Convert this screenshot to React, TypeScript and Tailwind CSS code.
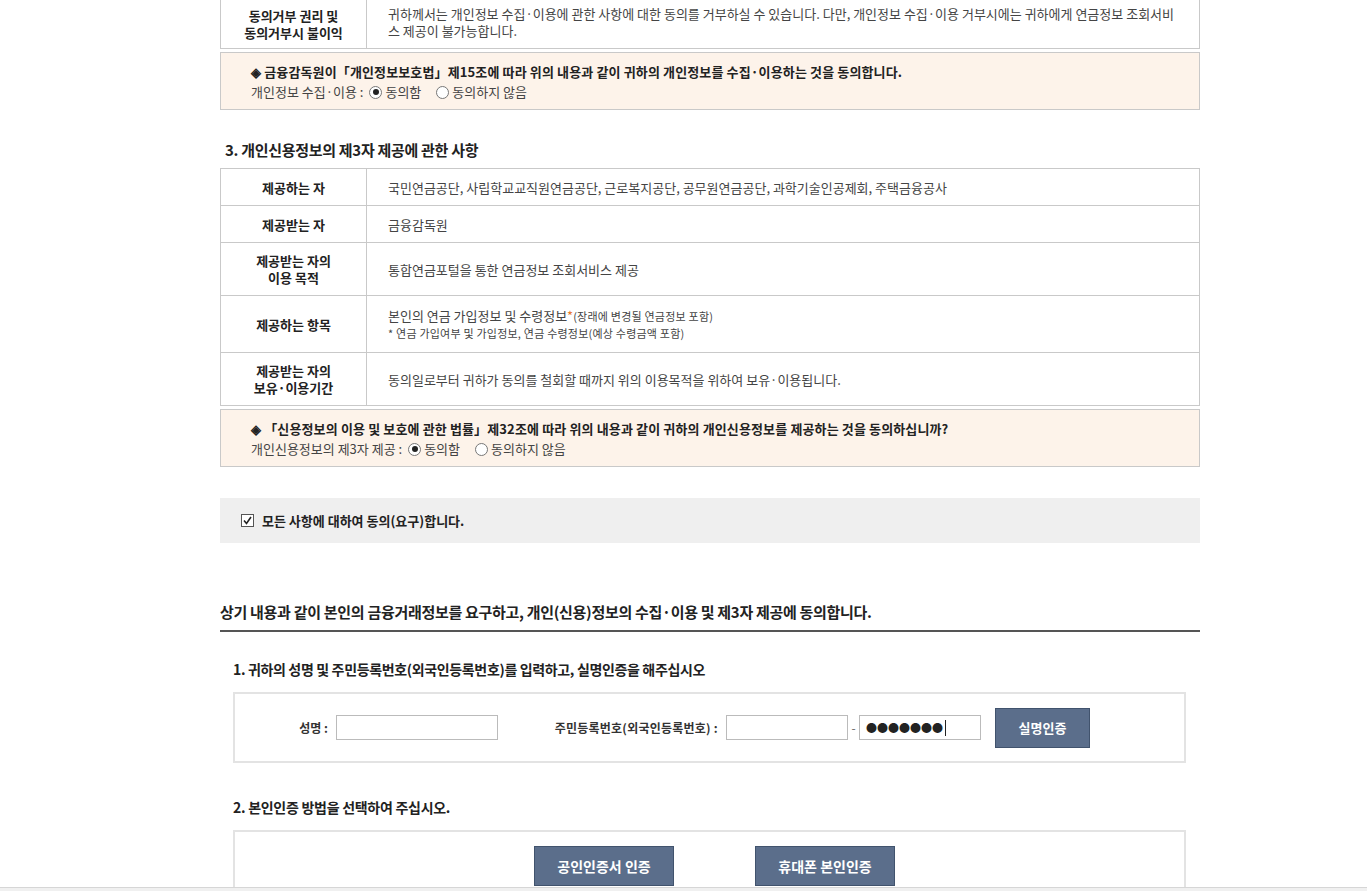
import type { ReactNode } from 'react';

const FONT = "font-['Noto_Sans_CJK_KR','Noto_Sans',sans-serif]";

const Radio = ({ checked }: { checked?: boolean }) => (
  <span className="inline-flex w-[13px] h-[13px] rounded-full border border-[#777] bg-white items-center justify-center mr-[3px] align-middle">
    {checked && <span className="w-[6px] h-[6px] rounded-full bg-[#222]" />}
  </span>
);

const Row = ({ head, children, h }: { head: ReactNode; children: ReactNode; h: string }) => (
  <div className={`flex border-b border-[#c9c9c9] ${h}`}>
    <div className="w-[146px] shrink-0 border-r border-[#c9c9c9] flex items-center justify-center text-center text-[13px] leading-[17px] font-bold text-[#222]">
      {head}
    </div>
    <div className="flex-1 flex flex-col justify-center pl-[21px] pr-[8px] text-[13px] leading-[17px] text-[#444]">
      {children}
    </div>
  </div>
);

const AgreeBox = ({ title, label }: { title: string; label: string }) => (
  <div className="mt-[3px] h-[58px] border border-[#c9c9c9] bg-[#fdf3ea] pl-[30px] pt-[9px]">
    <div className="text-[13px] leading-[20px] font-bold text-[#222] tracking-[0.01em]">◈ {title}</div>
    <div className="text-[13px] leading-[20px] text-[#444] flex items-center">
      <span>{label} :</span>
      <span className="ml-[6px] flex items-center"><Radio checked />동의함</span>
      <span className="ml-[15px] flex items-center"><Radio />동의하지 않음</span>
    </div>
  </div>
);

const Btn = ({ children, w, size }: { children: ReactNode; w: string; size: string }) => (
  <button className={`${w} ${size} h-[40px] bg-[#5b6e8b] border border-[#41536d] text-white font-bold`}>
    {children}
  </button>
);

export default function App() {
  return (
    <div className={`${FONT} h-[891px] w-full flex flex-col bg-white overflow-hidden`}>
      <div className="flex-1 overflow-hidden">
        <div className="ml-[220px] w-[980px]">
          {/* top table, cut off by the scroll */}
          <div className="border-x border-[#c9c9c9]">
            <Row h="h-[49px]" head={<>동의거부 권리 및<br />동의거부시 불이익</>}>
              <div className="pb-[4px] whitespace-nowrap">
                <div>귀하께서는 개인정보 수집·이용에 관한 사항에 대한 동의를 거부하실 수 있습니다. 다만, 개인정보 수집·이용 거부시에는 귀하에게 연금정보 조회서비</div>
                <div>스 제공이 불가능합니다.</div>
              </div>
            </Row>
          </div>
          <AgreeBox title="금융감독원이「개인정보보호법」제15조에 따라 위의 내용과 같이 귀하의 개인정보를 수집·이용하는 것을 동의합니다." label="개인정보 수집·이용" />

          <div className="mt-[30px] mb-[8px] pl-[5px] text-[15px] leading-[20px] font-bold text-[#222] tracking-[-0.02em]">
            3. 개인신용정보의 제3자 제공에 관한 사항
          </div>
          <div className="border-x border-t border-[#c9c9c9]">
            <Row h="h-[37px]" head="제공하는 자">
              국민연금공단, 사립학교교직원연금공단, 근로복지공단, 공무원연금공단, 과학기술인공제회, 주택금융공사
            </Row>
            <Row h="h-[37px]" head="제공받는 자">금융감독원</Row>
            <Row h="h-[53px]" head={<>제공받는 자의<br />이용 목적</>}>통합연금포털을 통한 연금정보 조회서비스 제공</Row>
            <Row h="h-[57px]" head="제공하는 항목">
              <div>
                본인의 연금 가입정보 및 수령정보<span className="text-[#e8782c]">*</span>
                <span className="text-[11px] tracking-[0.02em]">(장래에 변경될 연금정보 포함)</span>
              </div>
              <div className="text-[11px] leading-[17px] tracking-[0.02em]">* 연금 가입여부 및 가입정보, 연금 수령정보(예상 수령금액 포함)</div>
            </Row>
            <Row h="h-[53px]" head={<>제공받는 자의<br />보유·이용기간</>}>
              동의일로부터 귀하가 동의를 철회할 때까지 위의 이용목적을 위하여 보유·이용됩니다.
            </Row>
          </div>
          <AgreeBox title="「신용정보의 이용 및 보호에 관한 법률」제32조에 따라 위의 내용과 같이 귀하의 개인신용정보를 제공하는 것을 동의하십니까?" label="개인신용정보의 제3자 제공" />

          {/* agree all */}
          <div className="mt-[31px] h-[45px] bg-[#efefef] flex items-center pl-[21px] text-[13px] font-bold text-[#222]">
            <svg width="13" height="13" viewBox="0 0 13 13" className="mr-[8px]">
              <rect x="0.5" y="0.5" width="12" height="12" fill="#fff" stroke="#555" />
              <path d="M3 6.5 L5.5 9.5 L10 3" fill="none" stroke="#222" strokeWidth="1.6" />
            </svg>
            모든 사항에 대하여 동의(요구)합니다.
          </div>

          <div className="mt-[59px] pb-[8px] border-b-2 border-[#555] text-[15px] leading-[20px] font-bold text-[#222] tracking-[-0.02em]">
            상기 내용과 같이 본인의 금융거래정보를 요구하고, 개인(신용)정보의 수집·이용 및 제3자 제공에 동의합니다.
          </div>

          <div className="mt-[27px] ml-[13px] text-[14px] leading-[20px] font-bold text-[#222] tracking-[-0.025em]">
            1. 귀하의 성명 및 주민등록번호(외국인등록번호)를 입력하고, 실명인증을 해주십시오
          </div>
          <div className="mt-[13px] ml-[13px] w-[953px] h-[71px] border-2 border-[#e3e3e3] flex items-center text-[12px] font-bold text-[#333]">
            <span className="w-[93px] text-right">성명 :</span>
            <input className="ml-[8px] w-[162px] h-[25px] border border-[#bbb] outline-none" />
            <span className="w-[220px] text-right tracking-[0.02em]">주민등록번호(외국인등록번호) :</span>
            <input className="ml-[8px] w-[122px] h-[25px] border border-[#bbb] outline-none" />
            <span className="w-[11px] text-center font-normal text-[#666]">-</span>
            <div className="w-[122px] h-[25px] border border-[#bbb] flex items-center pl-[6px] text-[11px] text-[#222]">
              ●●●●●●●<span className="ml-[2px] w-px h-[16px] bg-[#222]" />
            </div>
            <div className="ml-[14px]">
              <Btn w="w-[95px]" size="text-[13px]">실명인증</Btn>
            </div>
          </div>

          <div className="mt-[34px] ml-[13px] text-[14px] leading-[20px] font-bold text-[#222] tracking-[-0.02em]">
            2. 본인인증 방법을 선택하여 주십시오.
          </div>
          <div className="mt-[13px] ml-[13px] w-[953px] h-[100px] border-2 border-[#e3e3e3] pt-[14px] flex justify-center gap-[81px] pl-[10px]">
            <Btn w="w-[140px]" size="text-[14px]">공인인증서 인증</Btn>
            <Btn w="w-[140px]" size="text-[14px]">휴대폰 본인인증</Btn>
          </div>
        </div>
      </div>
      <div className="h-[4px] border-t border-[#d6d6d6] bg-[#f0f0f0]" />
    </div>
  );
}
